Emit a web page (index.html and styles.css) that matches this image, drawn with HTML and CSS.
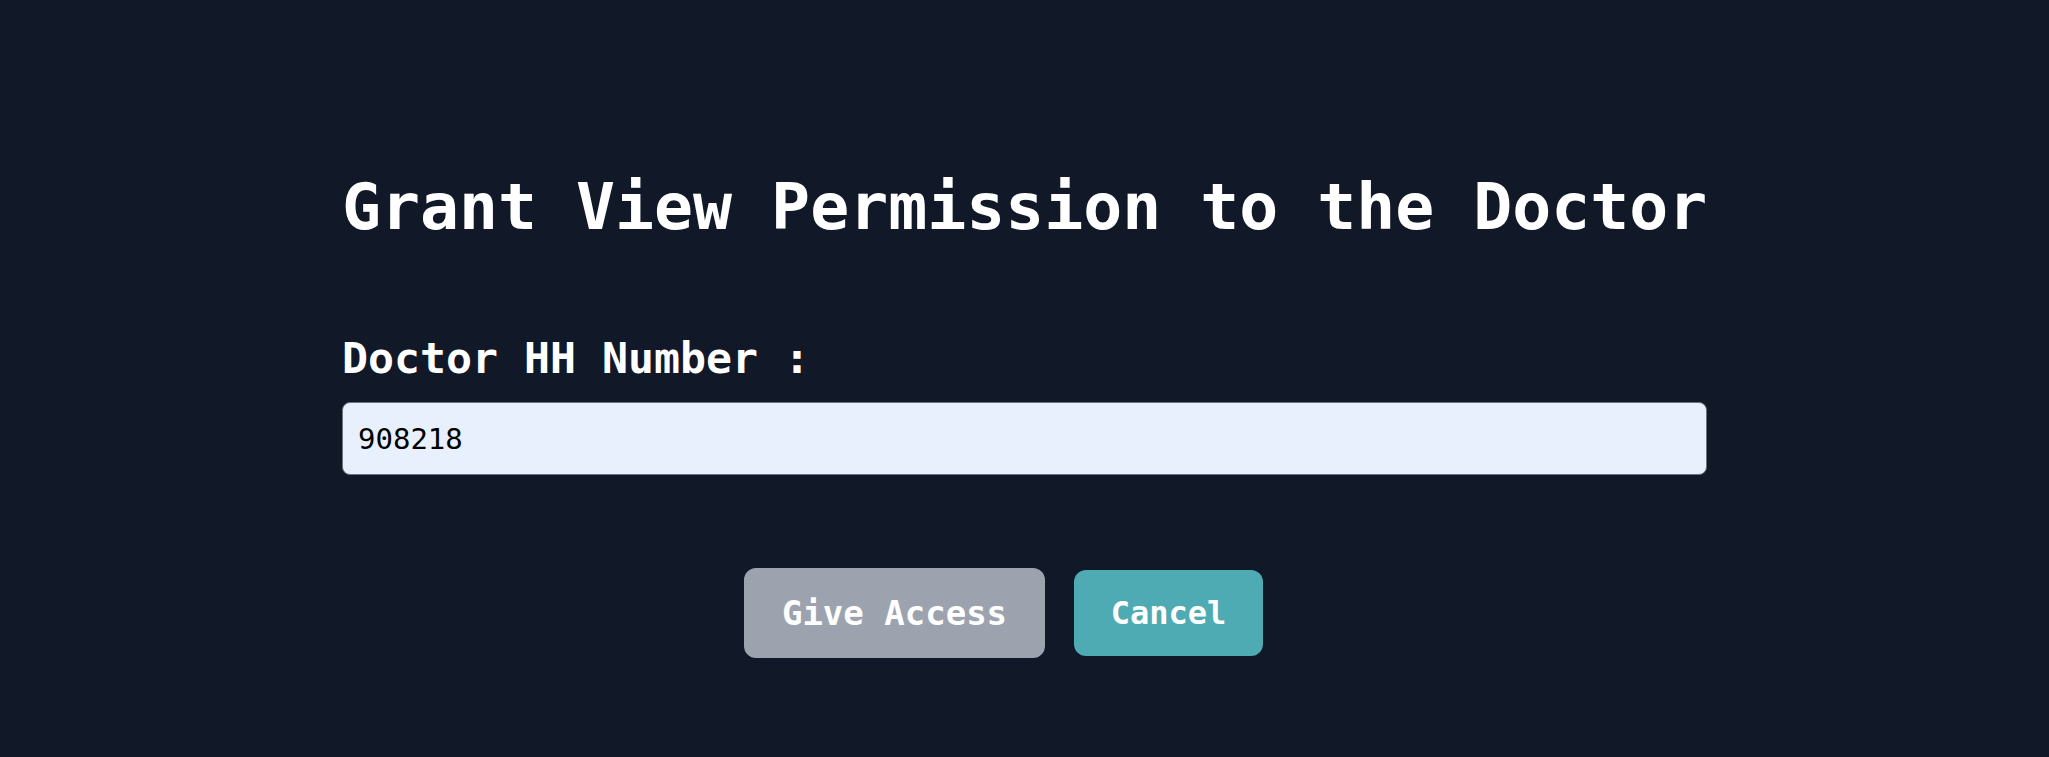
FILE: index.html
```html
<!DOCTYPE html>
<html lang="en">
<head>
<meta charset="utf-8">
<title>Grant View Permission</title>
<link rel="stylesheet" href="styles.css">
</head>
<body>
<main class="page">
  <form class="panel">
    <h1 class="title">Grant View Permission to the Doctor</h1>
    <label class="label" for="hh">Doctor HH Number :</label>
    <input class="field" id="hh" type="text" value="908218">
    <div class="actions">
      <button type="button" class="btn btn-give">Give Access</button>
      <button type="button" class="btn btn-cancel">Cancel</button>
    </div>
  </form>
</main>
</body>
</html>
```

FILE: styles.css
```css
* { box-sizing: border-box; }
html, body {
  margin: 0;
  padding: 0;
  background: #111827;
}
body {
  width: 2049px;
  height: 757px;
  font-family: "DejaVu Sans Mono", monospace;
  color: #ffffff;
}
.page {
  display: flex;
  justify-content: center;
  padding-top: 168px;
}
.panel {
  width: 1365px;
  display: flex;
  flex-direction: column;
}
.title {
  margin: 0;
  font-size: 64.8px;
  line-height: 78px;
  font-weight: bold;
  white-space: nowrap;
}
.label {
  margin-top: 87px;
  font-size: 43.2px;
  font-weight: bold;
  line-height: 50px;
}
.field {
  margin-top: 19px;
  height: 73px;
  width: 100%;
  border: 1px solid #6b7280;
  border-radius: 8px;
  background: #e8f0fe;
  color: #000000;
  font-family: "DejaVu Sans Mono", monospace;
  font-size: 29px;
  padding: 0 15px;
  outline: none;
}
.actions {
  margin-top: 93px;
  display: flex;
  justify-content: center;
  align-items: center;
  gap: 29px;
  padding-right: 42px;
}
.btn {
  font-family: "DejaVu Sans Mono", monospace;
  font-weight: bold;
  color: #ffffff;
  border-radius: 12px;
  cursor: pointer;
}
.btn-give {
  font-size: 34px;
  background: #9ca3af;
  border: 2px solid #9ca3af;
  width: 301px;
  height: 90px;
}
.btn-cancel {
  font-size: 32px;
  background: #4eabb3;
  border: none;
  width: 189px;
  height: 86px;
}
```
